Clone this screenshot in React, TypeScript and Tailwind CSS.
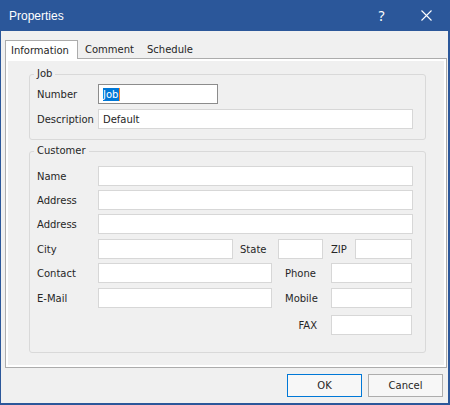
import React from "react";

type FieldProps = {
  w: string;
  value?: string;
  selected?: boolean;
};

const Field = ({ w, value, selected }: FieldProps) => (
  <div
    className={`h-[20px] ${w} shrink-0 bg-white border ${
      selected ? "border-[#8c8c8c]" : "border-[#d7d7d7]"
    } flex items-center pl-[4px] text-[#1e1e1e]`}
  >
    {selected ? (
      <span className="flex h-[13px] items-center bg-[#0078d7] text-white leading-[13px]">
        {value}
        <span className="ml-px h-[13px] w-px bg-[#ff8728]" />
      </span>
    ) : (
      value
    )}
  </div>
);

const Label = ({ children, w = "w-[61px]" }: { children: React.ReactNode; w?: string }) => (
  <div className={`${w} shrink-0 text-[#262626]`}>{children}</div>
);

const Group = ({
  title,
  children,
  className,
}: {
  title: string;
  children: React.ReactNode;
  className: string;
}) => (
  <fieldset className={`w-[397px] border border-[#d9d9d9] rounded-[3px] pl-[7px] ${className}`}>
    <legend className="-ml-[3px] px-[3px] leading-[14px] text-[#262626]">{title}</legend>
    {children}
  </fieldset>
);

export default function App() {
  return (
    <div className="w-[450px] h-[405px] bg-[#2b579a] flex flex-col font-['DejaVu_Sans',sans-serif] text-[10px] select-none">
      {/* Title bar */}
      <div className="h-[31px] shrink-0 flex items-center text-white">
        <div className="flex-1 pl-[9px] font-['Liberation_Sans',sans-serif] text-[12px] leading-none">
          Properties
        </div>
        <div className="w-[46px] h-full flex items-center justify-center pl-[3px] font-['Noto_Sans',sans-serif] text-[14px]">
          ?
        </div>
        <div className="w-[46px] h-full mr-px flex items-center justify-center">
          <svg width="11" height="11" viewBox="0 0 11 11" fill="none" stroke="white" strokeWidth="1.1">
            <path d="M0.5 0.5L10.5 10.5M10.5 0.5L0.5 10.5" />
          </svg>
        </div>
      </div>

      {/* Body */}
      <div className="flex-1 ml-px mr-[2px] mb-[2px] bg-[#f0f0f0] flex flex-col pt-[9px] pr-[5px]">
        {/* Tabs */}
        <div className="flex h-[19px] ml-[4px] items-stretch relative z-10 -mb-px">
          <div className="w-[73px] bg-white border border-b-0 border-[#acacac] pl-[5px] flex items-center text-[#262626]">
            Information
          </div>
          <div className="pl-[7px] pr-[6px] flex items-center text-[#262626]">Comment</div>
          <div className="pl-[7px] pr-[6px] flex items-center text-[#262626]">Schedule</div>
        </div>

        {/* Panel */}
        <div className="ml-[4px] w-[442px] h-[310px] border border-[#acacac]">
          <div className="h-full border-2 border-white pl-[21px] pt-[6px]">
            <Group title="Job" className="pb-[10px]">
              <div className="flex flex-col pt-[3px]">
                <div className="flex items-center">
                  <Label>Number</Label>
                  <Field w="w-[120px]" value="Job" selected />
                </div>
                <div className="flex items-center mt-[5px]">
                  <Label>Description</Label>
                  <Field w="w-[315px]" value="Default" />
                </div>
              </div>
            </Group>

            <Group title="Customer" className="mt-[4px] pb-[17px]">
              <div className="flex flex-col pt-[8px] w-[375px]">
                <div className="flex items-center">
                  <Label>Name</Label>
                  <Field w="w-[315px]" />
                </div>
                <div className="flex items-center mt-[4px]">
                  <Label>Address</Label>
                  <Field w="w-[315px]" />
                </div>
                <div className="flex items-center mt-[4px]">
                  <Label>Address</Label>
                  <Field w="w-[315px]" />
                </div>
                <div className="flex items-center mt-[5px]">
                  <Label>City</Label>
                  <Field w="w-[135px]" />
                  <Label w="w-[38px] ml-[7px]">State</Label>
                  <Field w="w-[45px]" />
                  <Label w="w-[24px] ml-[8px]">ZIP</Label>
                  <Field w="w-[57px]" />
                </div>
                <div className="flex items-center mt-[4px]">
                  <Label>Contact</Label>
                  <Field w="w-[174px]" />
                  <Label w="w-[46px] ml-[13px]">Phone</Label>
                  <Field w="w-[81px]" />
                </div>
                <div className="flex items-center mt-[5px]">
                  <Label>E-Mail</Label>
                  <Field w="w-[174px]" />
                  <Label w="w-[46px] ml-[13px]">Mobile</Label>
                  <Field w="w-[81px]" />
                </div>
                <div className="flex items-center justify-end mt-[7px]">
                  <div className="mr-[14px] text-[#262626]">FAX</div>
                  <Field w="w-[81px]" />
                </div>
              </div>
            </Group>
          </div>
        </div>

        {/* Buttons */}
        <div className="flex justify-end gap-[6px] mt-[6px]">
          <button className="w-[75px] h-[23px] bg-[#f7f7f7] border border-[#0078d7] text-[#262626] flex items-center justify-center">
            OK
          </button>
          <button className="w-[75px] h-[23px] bg-[#f7f7f7] border border-[#adadad] text-[#262626] flex items-center justify-center">
            Cancel
          </button>
        </div>
      </div>
    </div>
  );
}
